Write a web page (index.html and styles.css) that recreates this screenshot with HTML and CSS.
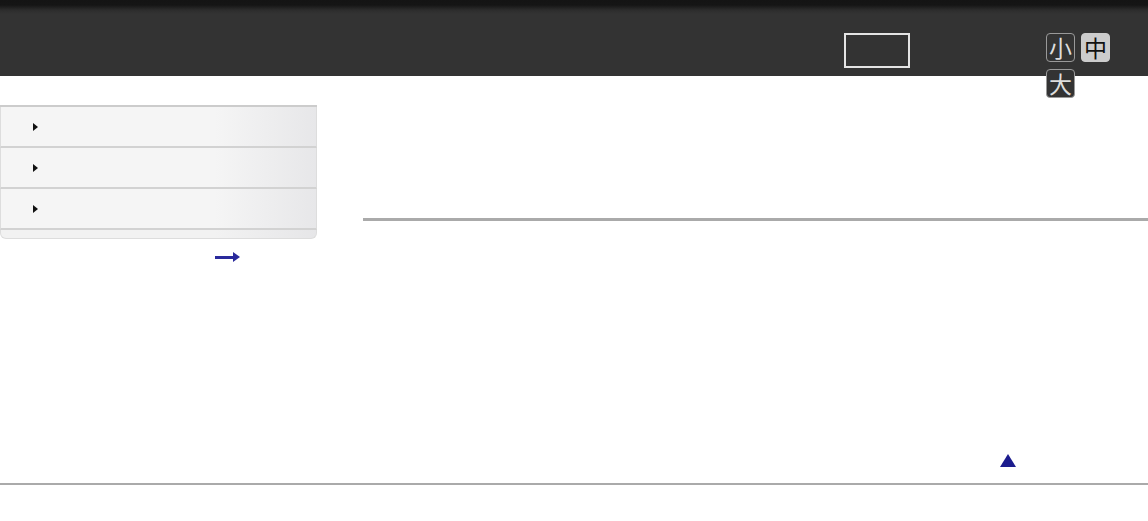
FILE: index.html
```html
<!DOCTYPE html>
<html lang="ja">
<head>
  <meta charset="UTF-8">
  <title>Help Guide</title>
  <link rel="stylesheet" href="styles.css">
</head>
<body>
  <header class="top-bar">
    <div class="search-box"></div>
    <div class="font-size">
      <a class="fs-btn" href="#">小</a>
      <a class="fs-btn fs-active" href="#">中</a>
      <a class="fs-btn" href="#">大</a>
    </div>
  </header>

  <div class="wrap">
    <aside class="sidebar">
      <ul class="side-menu">
        <li><a href="#"><span class="tri"></span></a></li>
        <li><a href="#"><span class="tri"></span></a></li>
        <li><a href="#"><span class="tri"></span></a></li>
      </ul>
      <div class="side-foot"></div>
      <div class="more-link">
        <a href="#" class="arrow-right"></a>
      </div>
    </aside>

    <main class="content">
      <div class="rule"></div>
    </main>
  </div>

  <div class="pagetop">
    <a href="#" class="tri-up"></a>
  </div>

  <footer class="footer"></footer>
</body>
</html>
```

FILE: styles.css
```css
body {
  margin: 0;
  padding: 0;
  background-color: #fff;
  font-family: "Liberation Sans", "Noto Sans CJK JP", sans-serif;
  color: #333;
}

/* header */
.top-bar {
  height: 76px;
  box-sizing: border-box;
  padding-top: 33px;
  display: flex;
  align-items: flex-start;
  justify-content: flex-end;
  background: linear-gradient(#141414 0, #151515 5px, #2c2c2c 10px, #333 14px);
}
.search-box {
  width: 62px;
  height: 31px;
  border: 2px solid #e4e4e4;
  margin-right: 136px;
}
.font-size {
  width: 70px;
  margin-right: 32px;
  display: flex;
  flex-wrap: wrap;
  column-gap: 6px;
  row-gap: 7px;
}
.fs-btn {
  width: 27px;
  height: 27px;
  border: 1px solid #999;
  border-radius: 4px;
  background-color: #333;
  color: #ddd;
  font-family: "Noto Sans CJK JP", sans-serif;
  font-size: 23px;
  line-height: 27px;
  text-align: center;
  text-decoration: none;
}
.fs-active {
  background-color: #ccc;
  border-color: #ccc;
  color: #111;
}

/* layout */
.wrap {
  display: flex;
  height: 378px;
}
.sidebar {
  width: 317px;
  margin-top: 29px;
}
.side-menu {
  list-style: none;
  margin: 0;
  padding: 0;
  border-top: 2px solid #ccc;
}
.side-menu li {
  height: 39px;
  border-bottom: 2px solid #d2d2d2;
  border-left: 1px solid #ddd;
  border-right: 1px solid #ddd;
  background: linear-gradient(to right, #f5f5f5 0, #f5f5f5 68%, #e7e7e9 100%);
}
.side-menu a {
  display: flex;
  align-items: center;
  height: 100%;
  padding-left: 32px;
}
.tri {
  width: 0;
  height: 0;
  border-top: 4px solid transparent;
  border-bottom: 4px solid transparent;
  border-left: 5px solid #111;
}
.side-foot {
  height: 8px;
  border: 1px solid #ddd;
  border-top: none;
  border-radius: 0 0 6px 6px;
  background: linear-gradient(to right, #f2f2f2 0, #f2f2f2 68%, #e6e6e8 100%);
}
.more-link {
  display: flex;
  justify-content: flex-end;
  padding-right: 77px;
  margin-top: 13px;
}
.arrow-right {
  position: relative;
  display: block;
  width: 25px;
  height: 10px;
}
.arrow-right::before {
  content: "";
  position: absolute;
  left: 0;
  top: 4px;
  width: 19px;
  height: 3px;
  background-color: #2a2a9c;
}
.arrow-right::after {
  content: "";
  position: absolute;
  right: 0;
  top: 0;
  border-top: 5px solid transparent;
  border-bottom: 5px solid transparent;
  border-left: 7px solid #2a2a9c;
}

.content {
  flex: 1;
  margin-left: 46px;
  padding-top: 142px;
}
.rule {
  height: 3px;
  background-color: #aaa;
}

/* page top + footer */
.pagetop {
  display: flex;
  justify-content: flex-end;
  padding-right: 132px;
  height: 13px;
  margin-bottom: 16px;
}
.tri-up {
  width: 0;
  height: 0;
  border-left: 8px solid transparent;
  border-right: 8px solid transparent;
  border-bottom: 13px solid #1c1c8e;
}
.footer {
  border-top: 2px solid #aaa;
  height: 36px;
}
```
